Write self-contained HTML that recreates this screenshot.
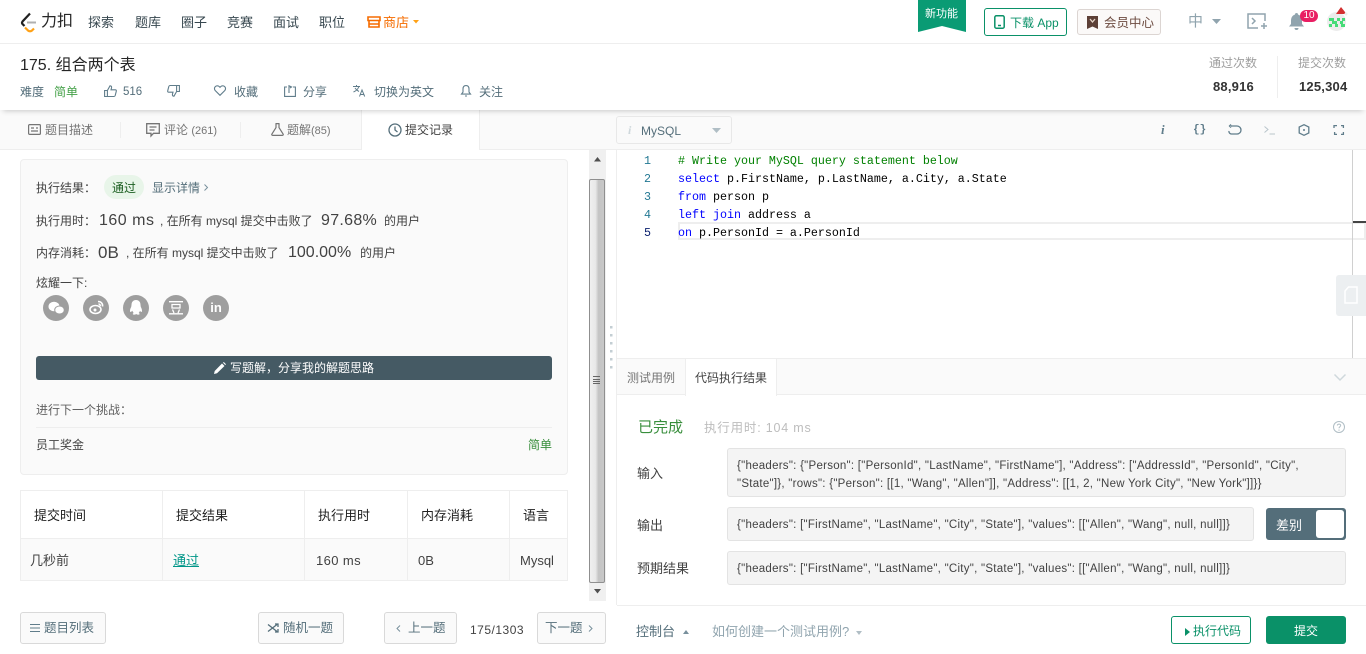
<!DOCTYPE html>
<html lang="zh"><head><meta charset="utf-8"><title>175. 组合两个表</title>
<style>
html,body{margin:0;padding:0;width:1366px;height:654px;overflow:hidden;background:#fff}
body{font:13px/1 "Liberation Sans","WenQuanYi Zen Hei","Noto Sans CJK SC",sans-serif;color:#546e7a;position:relative}
.t{position:absolute;white-space:nowrap;line-height:16px}
.b{position:absolute;box-sizing:border-box}
svg{position:absolute;overflow:visible}
.nav{color:#37474f;font-size:13px;top:15px}
.m{color:#546e7a;font-size:12px;top:84px}
.tab{font-size:12px;color:#757575;top:122px}
.d{color:#424242;font-size:12px}
.big{font-size:16px;color:#424242;line-height:20px}
.th{color:#212121;font-size:13px;top:508px}
.td{color:#424242;font-size:13px;top:553px}
.code{position:absolute;left:678px;font:11.67px/18px "Liberation Mono",monospace;color:#000;white-space:pre}
.code b{font-weight:400;color:#00f}
.ln{position:absolute;left:644px;font:11.67px/18px "Liberation Mono",monospace;color:#237893;white-space:pre}
.box{position:absolute;box-sizing:border-box;background:#f4f4f4;border:1px solid #e3e3e3;border-radius:3px;color:#424242;font-size:11.5px;letter-spacing:.26px;line-height:18px;padding:0 9px;white-space:nowrap}
.lbl{color:#424242;font-size:13px}
.btn{position:absolute;box-sizing:border-box;background:#fafafa;border:1px solid #d9d9d9;border-radius:3px;height:32px;top:612px}
.sc{position:absolute;top:295px;width:26px;height:26px;border-radius:50%;background:#9e9e9e;color:#fff;font-size:13px;line-height:26px;text-align:center}
</style></head><body>

<!-- top nav -->
<div class="b" style="left:0;top:0;width:1366px;height:44px;background:#fff;border-bottom:1px solid #eeeeee"></div>
<svg style="left:20px;top:12px" width="17" height="21" viewBox="0 0 17 21" fill="none"><path d="M10 1.500 2.500 9.500a2 2 0 0 0 0 2.500l2 2" stroke="#212121" stroke-width="2.200"/><path d="M5 15.500 8 18.500a3 3 0 0 0 4 0l2-2" stroke="#ffa116" stroke-width="2.200"/><path d="M7 10.500h9" stroke="#b0b0b0" stroke-width="2"/></svg>
<div class="t" style="left:41px;top:14px;font-size:16px;color:#262626">力扣</div>
<div class="t nav" style="left:88px">探索</div>
<div class="t nav" style="left:135px">题库</div>
<div class="t nav" style="left:181px">圈子</div>
<div class="t nav" style="left:227px">竞赛</div>
<div class="t nav" style="left:273px">面试</div>
<div class="t nav" style="left:319px">职位</div>
<svg style="left:367px;top:16px" width="14" height="12" viewBox="0 0 14 12" fill="none"><path d="M1 1h12v3.500H1zM2 4.500V11h10V4.500M2 8h10" stroke="#f56c00" stroke-width="1.600"/></svg>
<div class="t nav" style="left:383px;color:#f56c00">商店</div>
<svg style="left:413px;top:20px" width="6" height="4"><path d="M0 0h6L3 3.500z" fill="#ffa116"/></svg>

<svg style="left:918px;top:0" width="48" height="32"><path d="M0 0h48v32L24 26 0 32z" fill="#0a9b74"/></svg>
<div class="t" style="left:925px;top:6px;font-size:11px;color:#fff">新功能</div>
<div class="b" style="left:984px;top:8px;width:83px;height:28px;border:1px solid #0a9168;border-radius:3px"></div>
<svg style="left:994px;top:15px" width="11" height="14" fill="none"><rect x=".8" y=".8" width="9.400" height="12.400" rx="1.500" stroke="#0a9168" stroke-width="1.500"/><path d="M4 10.500h3" stroke="#0a9168" stroke-width="1.500"/></svg>
<div class="t" style="left:1010px;top:15px;font-size:12px;color:#0a9168">下载 App</div>
<div class="b" style="left:1077px;top:9px;width:84px;height:26px;border:1px solid #dcd5d2;border-radius:3px;background:#fbf9f8"></div>
<svg style="left:1087px;top:16px" width="11" height="13"><path d="M0 0h11v13L5.500 10.500 0 13z" fill="#5d4037"/><path d="M3 3 5.500 6 8 3" stroke="#e6d6c9" fill="none" stroke-width="1.300"/></svg>
<div class="t" style="left:1104px;top:15px;font-size:12.500px;color:#6d4c41">会员中心</div>
<div class="t" style="left:1188px;top:14px;font-size:15px;color:#90a4ae">中</div>
<svg style="left:1212px;top:19px" width="9" height="5"><path d="M0 0h9L4.500 5z" fill="#90a4ae"/></svg>
<svg style="left:1247px;top:13px" width="20" height="17" fill="none" stroke="#90a4ae" stroke-width="1.500"><path d="M18 8V1H1v14h10"/><path d="M5 5l3 3-3 3M14 13h6M17 10v6"/></svg>
<svg style="left:1289px;top:13px" width="15" height="17"><path d="M7.500 0a1.500 1.500 0 0 1 1.500 1.500C12 2.500 13 5 13 8v3l2 2.500H0L2 11V8c0-3 1-5.500 4-6.500A1.500 1.500 0 0 1 7.500 0zM5.500 15h4a2 2 0 0 1-4 0z" fill="#90a4ae"/></svg>
<div class="b" style="left:1300px;top:10px;width:18px;height:12px;border-radius:6px;background:#e91e63;color:#fff;font-size:10px;line-height:12px;text-align:center">10</div>
<div class="b" style="left:1327px;top:12px;width:19px;height:19px;border-radius:50%;background:#ececec"></div>
<svg style="left:1329px;top:6px" width="18" height="24"><path d="M7 8 12 1l4 5 1 2z" fill="#d32f2f"/><circle cx="17" cy="8" r="1.500" fill="#eee"/><path d="M0 12h5v3H0zM8 12h3v3H8zM13 12h3v3h-3zM3 15h5v3H3zM11 15h3v3h-3zM0 18h3v3H0zM6 18h3v3H6zM12 18h4v3h-4z" fill="#46dc78"/></svg>

<!-- title bar -->
<div class="b" style="left:0;top:44px;width:1366px;height:66px;background:#fff;box-shadow:0 4px 5px -3px rgba(0,0,0,.2);z-index:2"></div>
<div style="position:absolute;left:0;top:0;width:1366px;height:654px;z-index:3">
<div class="t" style="left:20px;top:58px;font-size:16px;color:#262626">175. 组合两个表</div>
<div class="t m" style="left:20px">难度</div>
<div class="t m" style="left:54px;color:#43a047">简单</div>
<svg style="left:104px;top:85px" width="13" height="12" fill="none" stroke="#607d8b" stroke-width="1.100"><path d="M.6 5.500h2.800v6H.6zM3.400 5.500 6 .8c1.400 0 1.800 1 1.500 2.200L7 4.800h4.300c.8 0 1.200.7 1 1.400l-1.100 4.300c-.2.600-.6 1-1.200 1H3.400"/></svg>
<div class="t m" style="left:123px;font-size:11.500px">516</div>
<svg style="left:167px;top:85px" width="13" height="12" fill="none" stroke="#607d8b" stroke-width="1.100"><path d="M12.400 6.500H9.600v-6h2.800zM9.600 6.500 7 11.200c-1.400 0-1.800-1-1.500-2.200L6 7.200H1.700c-.8 0-1.200-.7-1-1.400L1.800 1.500C2 .9 2.400.5 3 .5h6.600"/></svg>
<svg style="left:214px;top:85px" width="12" height="11" fill="none" stroke="#607d8b" stroke-width="1.100"><path d="M6 10.300 1.300 5.600a2.800 2.800 0 0 1 4-4L6 2.300l.7-.7a2.800 2.800 0 0 1 4 4z"/></svg>
<div class="t m" style="left:234px">收藏</div>
<svg style="left:284px;top:85px" width="12" height="12" fill="none" stroke="#607d8b" stroke-width="1.100"><path d="M3 2H.6v9.400h10.800V2H9M5 8V.8L7.500 2 6 3"/></svg>
<div class="t m" style="left:303px">分享</div>
<svg style="left:353px;top:85px" width="13" height="12" fill="none" stroke="#607d8b" stroke-width="1"><path d="M0 1.500h7M3.500 0v1.500M6 1.500C5 4 3 6 .5 7M2 3c1 1.500 2 2.500 4 3.500M6.500 11.500 9 5l2.700 6.500M7.500 9.500h3.500"/></svg>
<div class="t m" style="left:374px">切换为英文</div>
<svg style="left:461px;top:85px" width="10" height="12" fill="none" stroke="#607d8b" stroke-width="1.100"><path d="M5 .6c2.300 0 3 1.700 3 3.500v3l1.500 2H.5L2 7.100v-3C2 2.300 2.700.6 5 .6zM4 11h2"/></svg>
<div class="t m" style="left:479px">关注</div>
<div class="t" style="left:1209px;top:55px;font-size:12px;color:#9e9e9e">通过次数</div>
<div class="t" style="left:1213px;top:79px;font-size:13px;font-weight:700;color:#333;letter-spacing:.2px">88,916</div>
<div class="b" style="left:1277px;top:56px;width:1px;height:42px;background:#eee"></div>
<div class="t" style="left:1298px;top:55px;font-size:12px;color:#9e9e9e">提交次数</div>
<div class="t" style="left:1299px;top:79px;font-size:13px;font-weight:700;color:#333;letter-spacing:.2px">125,304</div>
</div>

<!-- tabs -->
<div class="b" style="left:0;top:110px;width:1366px;height:40px;background:#fafafa;border-bottom:1px solid #eeeeee"></div>
<div class="b" style="left:361px;top:110px;width:119px;height:40px;background:#fff;border-left:1px solid #eee;border-right:1px solid #eee"></div>
<div class="b" style="left:120px;top:122px;width:1px;height:16px;background:#eee"></div>
<div class="b" style="left:240px;top:122px;width:1px;height:16px;background:#eee"></div>
<svg style="left:28px;top:124px" width="13" height="11" fill="none" stroke="#757575" stroke-width="1.200"><rect x=".6" y=".6" width="11.800" height="9.800" rx="1"/><path d="M3 4h3M3 7h7M8 4h2"/></svg>
<div class="t tab" style="left:45px">题目描述</div>
<svg style="left:146px;top:123px" width="14" height="14" fill="none" stroke="#757575" stroke-width="1.300"><path d="M.7.7h12.600v9.600H7.500L5 13v-2.700H.7zM3.500 4h7M3.500 7h5"/></svg>
<div class="t tab" style="left:164px">评论 <span style="font-size:11px">(261)</span></div>
<svg style="left:271px;top:123px" width="13" height="13" fill="none" stroke="#757575" stroke-width="1.200"><path d="M4.500.6h4M5 .6v4L.9 11c-.4.700 0 1.400.8 1.400h9.600c.8 0 1.200-.7.800-1.400L8 4.600v-4"/></svg>
<div class="t tab" style="left:287px">题解<span style="font-size:11px">(85)</span></div>
<svg style="left:388px;top:123px" width="14" height="14" fill="none" stroke="#546e7a" stroke-width="1.300"><circle cx="7" cy="7" r="6"/><path d="M7 3.500V7l2.500 2"/></svg>
<div class="t tab" style="left:405px;color:#424242">提交记录</div>

<div class="b" style="left:616px;top:116px;width:116px;height:28px;background:#fafafa;border:1px solid #e8e8e8;border-radius:3px"></div>
<div class="t" style="left:628px;top:122px;font:italic 700 12px/16px 'Liberation Serif',serif;color:#cfd8dc">i</div>
<div class="t" style="left:641px;top:123px;font-size:12px;color:#546e7a">MySQL</div>
<svg style="left:712px;top:128px" width="9" height="5"><path d="M0 0h9L4.500 5z" fill="#b0bec5"/></svg>
<div class="t" style="left:1161px;top:121px;font:italic 700 13px/18px 'Liberation Serif',serif;color:#607d8b">i</div>
<div class="t" style="left:1193px;top:122px;font:700 11px/16px 'Liberation Mono',monospace;color:#607d8b">{}</div>
<svg style="left:1228px;top:124px" width="12" height="12" fill="none" stroke="#607d8b" stroke-width="1.300"><path d="M3 2h6a3.500 3.500 0 0 1 0 8H3.500a2.500 2.500 0 0 1-2.500-3M3 .5 1.500 2 3 3.500"/></svg>
<svg style="left:1264px;top:126px" width="11" height="9" fill="none" stroke="#b9c5cb" stroke-width="1"><path d="M.5.500 4 3.500.5 6.500M5.500 8H11"/></svg>
<svg style="left:1298px;top:124px" width="12" height="12" fill="none" stroke="#607d8b" stroke-width="1.300"><path d="M6 .7 10.800 3v6L6 11.300 1.200 9V3z"/><circle cx="6" cy="6" r="1" fill="#607d8b" stroke="none"/></svg>
<svg style="left:1334px;top:125px" width="10" height="10" fill="none" stroke="#607d8b" stroke-width="1.300"><path d="M0 3V.6h3M7 .6h2.400V3M9.400 7v2.400H7M3 9.400H.6V7"/></svg>

<!-- left pane result card -->
<div class="b" style="left:20px;top:159px;width:548px;height:316px;background:#fafafa;border:1px solid #eee;border-radius:4px"></div>
<div class="t d" style="left:36px;top:180px">执行结果：</div>
<div class="b" style="left:104px;top:175px;width:40px;height:24px;border-radius:12px;background:#e8f5e9"></div>
<div class="t" style="left:112px;top:180px;font-size:12px;color:#1b5e20">通过</div>
<div class="t" style="left:152px;top:180px;font-size:12px;color:#546e7a">显示详情</div>
<svg style="left:204px;top:184px" width="5" height="7" fill="none" stroke="#78909c"><path d="M.5.500 3.500 3.500.5 6.500"/></svg>
<div class="t d" style="left:36px;top:213px">执行用时：</div>
<div class="t big" style="left:99px;top:211px;letter-spacing:.5px">160 ms</div>
<div class="t d" style="left:160px;top:213px">, 在所有 mysql 提交中击败了</div>
<div class="t big" style="left:321px;top:211px;letter-spacing:.3px">97.68%</div>
<div class="t d" style="left:384px;top:213px">的用户</div>
<div class="t d" style="left:36px;top:245px">内存消耗：</div>
<div class="t big" style="left:98px;top:243px;font-size:17px">0B</div>
<div class="t d" style="left:126px;top:245px">, 在所有 mysql 提交中击败了</div>
<div class="t big" style="left:288px;top:243px">100.00%</div>
<div class="t d" style="left:360px;top:245px">的用户</div>
<div class="t d" style="left:36px;top:275px">炫耀一下:</div>
<div class="sc" style="left:43px"></div>
<svg style="left:48px;top:301px" width="17" height="14"><ellipse cx="6" cy="5.500" rx="5.500" ry="4.800" fill="#fff"/><ellipse cx="11.500" cy="9" rx="4.800" ry="4" fill="#fff" stroke="#9e9e9e"/></svg>
<div class="sc" style="left:83px"></div>
<svg style="left:89px;top:300px" width="16" height="15" fill="none" stroke="#fff" stroke-width="1.600"><ellipse cx="6.500" cy="9.500" rx="5.500" ry="4"/><circle cx="6" cy="10" r="1.500" fill="#fff" stroke="none"/><path d="M9 1.500c3 0 5 2 4.500 5M9.500 4c1 0 2 1 1.700 2"/></svg>
<div class="sc" style="left:123px"></div>
<svg style="left:129px;top:300px" width="14" height="16"><path d="M7 0c3 0 4.500 2.200 4.500 5l.3 2c1.500 2.500 1.500 5 .5 5-.5 0-1-.8-1.300-1.200-.3 1-.8 1.700-1.300 2.200 1 .5 1.300 1 .5 1.500-1 .3-2.500 0-3-.5-.5.500-2 .8-3 .5-.8-.5-.5-1 .5-1.500-.5-.5-1-1.200-1.300-2.200C2.700 11.200 2.200 12 1.700 12 .7 12 .7 9.500 2.200 7l.3-2C2.500 2.200 4 0 7 0z" fill="#fff"/></svg>
<div class="sc" style="left:163px"></div>
<svg style="left:169px;top:301px" width="14" height="14" fill="none" stroke="#fff" stroke-width="1.300"><path d="M0 .7h14M3 3.500h8v3.500H3zM3.500 8.500 5 12M10.500 8.500 9 12M0 12.800h14"/></svg>
<div class="sc" style="left:203px;font-weight:700;font-size:13px">in</div>

<div class="b" style="left:36px;top:356px;width:516px;height:24px;background:#455a64;border-radius:3px"></div>
<svg style="left:214px;top:362px" width="12" height="12"><path d="M0 12l.7-3L8 1.500 10.500 4 3 11.300zM9 .8l.8-.8 2.200 2.200-.8.800z" fill="#fff"/></svg>
<div class="t" style="left:230px;top:360px;font-size:12px;color:#fff">写题解，分享我的解题思路</div>
<div class="t" style="left:36px;top:402px;font-size:12px;color:#616161">进行下一个挑战：</div>
<div class="b" style="left:36px;top:427px;width:516px;height:1px;background:#eee"></div>
<div class="t" style="left:36px;top:437px;font-size:12px;color:#424242">员工奖金</div>
<div class="t" style="left:528px;top:437px;font-size:12px;color:#388e3c">简单</div>

<!-- table -->
<div class="b" style="left:20px;top:490px;width:548px;height:91px;border:1px solid #eee"></div>
<div class="b" style="left:21px;top:538px;width:546px;height:42px;background:#fafafa;border-top:1px solid #eee"></div>
<div class="b" style="left:162px;top:490px;width:1px;height:91px;background:#eee"></div>
<div class="b" style="left:304px;top:490px;width:1px;height:91px;background:#eee"></div>
<div class="b" style="left:407px;top:490px;width:1px;height:91px;background:#eee"></div>
<div class="b" style="left:509px;top:490px;width:1px;height:91px;background:#eee"></div>
<div class="t th" style="left:34px">提交时间</div>
<div class="t th" style="left:176px">提交结果</div>
<div class="t th" style="left:318px">执行用时</div>
<div class="t th" style="left:421px">内存消耗</div>
<div class="t th" style="left:523px">语言</div>
<div class="t td" style="left:30px">几秒前</div>
<div class="t td" style="left:173px;color:#009688;text-decoration:underline">通过</div>
<div class="t td" style="left:316px;letter-spacing:.4px">160 ms</div>
<div class="t td" style="left:418px">0B</div>
<div class="t td" style="left:520px">Mysql</div>

<!-- scrollbar -->
<div class="b" style="left:589px;top:150px;width:17px;height:451px;background:#f0f0f0"></div>
<svg style="left:594px;top:157px" width="8" height="5"><path d="M0 4.500h7L3.500 0z" fill="#505050"/></svg>
<svg style="left:594px;top:589px" width="8" height="5"><path d="M0 0h7L3.500 4.500z" fill="#505050"/></svg>
<div class="b" style="left:589px;top:179px;width:16px;height:404px;border:1px solid #8f8f8f;border-radius:2px;background:linear-gradient(90deg,#f0f0f0 0,#e8e8e8 40%,#c4c4c4 60%,#c8c8c8 100%)"></div>
<div class="b" style="left:593px;top:376px;width:7px;height:8px;border-top:1px solid #666;border-bottom:1px solid #666;background:linear-gradient(#666,#666) 0 2px/7px 1px no-repeat,linear-gradient(#666,#666) 0 4px/7px 1px no-repeat"></div>
<svg style="left:610px;top:326px" width="3" height="44"><path d="M0 0h2.500v2.500H0zM0 8h2.500v2.500H0zM0 16h2.500v2.500H0zM0 24h2.500v2.500H0zM0 32h2.500v2.500H0zM0 40h2.500v2.500H0z" fill="#c3ced3"/></svg>

<!-- editor -->
<div class="b" style="left:616px;top:150px;width:1px;height:455px;background:#eee"></div>
<div class="b" style="left:678px;top:222px;width:688px;height:18px;border:2px solid #eee"></div>
<div class="ln" style="top:152px">1
2
3
4
</div>
<div class="ln" style="top:224px;color:#0b216f">5</div>
<div class="code" style="top:152px"><span style="color:#008000"># Write your MySQL query statement below</span>
<b>select</b> p.FirstName, p.LastName, a.City, a.State
<b>from</b> person p
<b>left</b> <b>join</b> address a
<b>on</b> p.PersonId = a.PersonId</div>
<div class="b" style="left:1352px;top:150px;width:1px;height:208px;background:#d0d0d0"></div>
<div class="b" style="left:1353px;top:221px;width:13px;height:2px;background:#444"></div>
<div class="b" style="left:1336px;top:275px;width:30px;height:41px;background:#eceff1;border-radius:3px 0 0 3px"></div>
<svg style="left:1344px;top:286px" width="14" height="18" fill="none" stroke="#fff" stroke-width="1.500"><path d="M4.500 1H13v16H1V5z"/></svg>

<!-- result tabs -->
<div class="b" style="left:617px;top:358px;width:749px;height:37px;background:#fafafa;border-top:1px solid #eee;border-bottom:1px solid #eee"></div>
<div class="b" style="left:685px;top:359px;width:92px;height:37px;background:#fff;border-left:1px solid #eee;border-right:1px solid #eee"></div>
<div class="t" style="left:627px;top:370px;font-size:12px;color:#757575">测试用例</div>
<div class="t" style="left:695px;top:370px;font-size:12px;color:#424242">代码执行结果</div>
<svg style="left:1334px;top:374px" width="12" height="7" fill="none" stroke="#cfd8dc" stroke-width="1.500"><path d="M.5.500 6 6 11.500.500"/></svg>

<div class="t" style="left:638px;top:420px;font-size:15px;color:#388e3c">已完成</div>
<div class="t" style="left:704px;top:420px;font-size:12.500px;color:#bdbdbd;letter-spacing:.8px">执行用时: 104 ms</div>
<svg style="left:1333px;top:421px" width="12" height="12" fill="none" stroke="#b0bec5"><circle cx="6" cy="6" r="5.500"/><path d="M4.300 4.500C4.500 2.500 7.800 2.700 7.700 4.500 7.600 5.800 6 5.700 6 7.300M6 8.500v1.200"/></svg>
<div class="t lbl" style="left:637px;top:466px">输入</div>
<div class="box" style="left:727px;top:448px;width:619px;height:49px;padding-top:8px;white-space:normal">{"headers": {"Person": ["PersonId", "LastName", "FirstName"], "Address": ["AddressId", "PersonId", "City", "State"]}, "rows": {"Person": [[1, "Wang", "Allen"]], "Address": [[1, 2, "New York City", "New York"]]}}</div>
<div class="t lbl" style="left:637px;top:518px">输出</div>
<div class="box" style="left:727px;top:507px;width:527px;height:34px;line-height:34px">{"headers": ["FirstName", "LastName", "City", "State"], "values": [["Allen", "Wang", null, null]]}</div>
<div class="t lbl" style="left:637px;top:561px">预期结果</div>
<div class="box" style="left:727px;top:551px;width:619px;height:34px;line-height:34px">{"headers": ["FirstName", "LastName", "City", "State"], "values": [["Allen", "Wang", null, null]]}</div>
<div class="b" style="left:1266px;top:508px;width:80px;height:32px;background:#546e7a;border-radius:3px"></div>
<div class="t" style="left:1276px;top:518px;font-size:13px;color:#fff">差别</div>
<div class="b" style="left:1316px;top:510px;width:28px;height:28px;background:#fff;border-radius:3px"></div>

<!-- bottom bars -->
<div class="b" style="left:617px;top:605px;width:749px;height:1px;background:#eee"></div>
<div class="btn" style="left:20px;width:86px"></div>
<svg style="left:30px;top:624px" width="10" height="8" fill="none" stroke="#607d8b"><path d="M0 .5h10M0 4h10M0 7.500h10"/></svg>
<div class="t" style="left:44px;top:620px;font-size:12.500px;color:#546e7a">题目列表</div>
<div class="btn" style="left:258px;width:86px"></div>
<svg style="left:268px;top:623px" width="11" height="10" fill="none" stroke="#546e7a" stroke-width="1.300"><path d="M0 1.500 9 8.500M0 8.500 9 1.500M7 1h3v3M7 9h3V6"/></svg>
<div class="t" style="left:283px;top:620px;font-size:12.500px;color:#546e7a">随机一题</div>
<div class="btn" style="left:384px;width:73px"></div>
<svg style="left:396px;top:625px" width="5" height="7" fill="none" stroke="#78909c"><path d="M4 .5 1 3.500 4 6.500"/></svg>
<div class="t" style="left:408px;top:620px;font-size:12.500px;color:#546e7a">上一题</div>
<div class="t" style="left:470px;top:622px;font-size:12px;color:#424242;letter-spacing:.5px">175/1303</div>
<div class="btn" style="left:537px;width:69px"></div>
<div class="t" style="left:545px;top:620px;font-size:12.500px;color:#546e7a">下一题</div>
<svg style="left:588px;top:625px" width="5" height="7" fill="none" stroke="#78909c"><path d="M1 .5 4 3.500 1 6.500"/></svg>
<div class="t" style="left:636px;top:624px;font-size:13px;color:#546e7a">控制台</div>
<svg style="left:683px;top:630px" width="6" height="4"><path d="M0 4h6L3 0z" fill="#78909c"/></svg>
<div class="t" style="left:712px;top:624px;font-size:13px;color:#90a4ae">如何创建一个测试用例?</div>
<svg style="left:856px;top:631px" width="6" height="4"><path d="M0 0h6L3 4z" fill="#b0bec5"/></svg>
<div class="b" style="left:1171px;top:616px;width:80px;height:28px;border:1px solid #0a9168;border-radius:3px"></div>
<svg style="left:1185px;top:628px" width="5" height="8"><path d="M0 0v8l5-4z" fill="#0a9168"/></svg>
<div class="t" style="left:1193px;top:623px;font-size:12px;color:#0a9168">执行代码</div>
<div class="b" style="left:1266px;top:616px;width:80px;height:28px;background:#0a9168;border-radius:3px"></div>
<div class="t" style="left:1294px;top:623px;font-size:12px;color:#fff">提交</div>
</body></html>
